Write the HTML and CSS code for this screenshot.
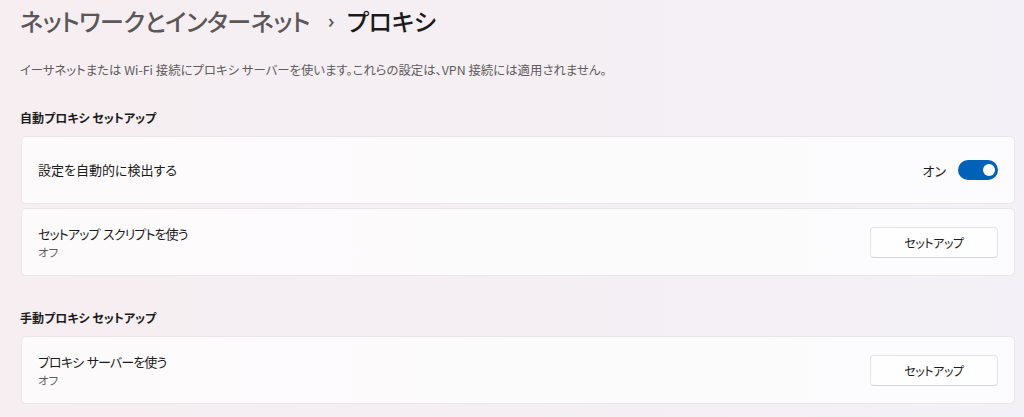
FILE: index.html
```html
<!DOCTYPE html>
<html lang="ja">
<head>
<meta charset="utf-8">
<link rel="stylesheet" href="styles.css">
</head>
<body>
<div class="page">
  <h1 class="title"><span class="crumb">ネットワークとインターネット</span><span class="chev">›</span><span class="current">プロキシ</span></h1>
  <p class="desc">イーサネットまたは Wi-Fi 接続にプロキシ サーバーを使います。これらの設定は、VPN 接続には適用されません。</p>

  <h2 class="section">自動プロキシ セットアップ</h2>
  <div class="cards">
    <div class="card">
      <div class="label"><div class="name">設定を自動的に検出する</div></div>
      <div class="control">
        <span class="state">オン</span>
        <span class="toggle"><span class="knob"></span></span>
      </div>
    </div>
    <div class="card">
      <div class="label"><div class="name kana">セットアップ スクリプトを使う</div><div class="sub">オフ</div></div>
      <div class="control"><button class="btn">セットアップ</button></div>
    </div>
  </div>

  <h2 class="section section2">手動プロキシ セットアップ</h2>
  <div class="cards">
    <div class="card">
      <div class="label"><div class="name kana">プロキシ サーバーを使う</div><div class="sub">オフ</div></div>
      <div class="control"><button class="btn">セットアップ</button></div>
    </div>
  </div>
</div>
</body>
</html>
```

FILE: styles.css
```css
html, body {
  margin: 0;
  padding: 0;
  height: 100%;
}
body {
  background: linear-gradient(90deg, #f6eef1 0%, #f5eff3 50%, #f3f1f7 100%);
  font-family: "Noto Sans CJK JP", "Noto Sans", sans-serif;
  font-feature-settings: "palt";
  color: #1b1b1b;
  overflow: hidden;
}
.page {
  padding: 3px 9px 0 21px;
}
.title {
  margin: 0 0 0 -1px;
  height: 36px;
  line-height: 36px;
  font-size: 24px;
  font-weight: 500;
  display: flex;
  align-items: center;
  letter-spacing: -0.4px;
}
.crumb {
  color: #5b5759;
}
.chev {
  color: #5b5759;
  font-size: 20px;
  margin: 0 13px 0 18px;
  font-family: "Noto Sans", sans-serif;
}
.current {
  color: #1b1b1b;
}
.desc {
  margin: 21px 0 0 -1px;
  font-size: 12.4px;
  line-height: 20px;
  color: #5f5c5e;
}
.section {
  margin: 28px 0 8px -1px;
  font-size: 12px;
  line-height: 20px;
  font-weight: 700;
  color: #1b1b1b;
}
.section2 {
  margin-top: 32px;
}
.cards {
  display: flex;
  flex-direction: column;
  gap: 4px;
}
.card {
  box-sizing: border-box;
  height: 68px;
  background: rgba(255, 255, 255, 0.72);
  border: 1px solid #ebe6e9;
  border-radius: 5px;
  padding: 0 16px;
  display: flex;
  align-items: center;
  justify-content: space-between;
}
.name {
  font-size: 13px;
  line-height: 20px;
  color: #1b1b1b;
}
.kana {
  letter-spacing: -0.9px;
  word-spacing: 1.5px;
}
.sub {
  font-size: 11.5px;
  line-height: 16px;
  color: #5f5c5e;
}
.control {
  display: flex;
  align-items: center;
  gap: 12px;
}
.state {
  font-size: 13px;
  color: #1b1b1b;
}
.toggle {
  width: 40px;
  height: 20px;
  border-radius: 10px;
  background: #0061b8;
  display: flex;
  align-items: center;
  justify-content: flex-end;
  padding-right: 3px;
  box-sizing: border-box;
}
.knob {
  width: 12px;
  height: 12px;
  border-radius: 50%;
  background: #ffffff;
}
.btn {
  width: 128px;
  height: 31px;
  margin-top: 1px;
  background: #fefefe;
  border: 1px solid #e6e3e5;
  border-bottom-color: #d6d3d5;
  border-radius: 4px;
  font-family: inherit;
  font-feature-settings: "palt";
  font-size: 12px;
  letter-spacing: -0.4px;
  color: #1b1b1b;
  padding: 0;
}
```
